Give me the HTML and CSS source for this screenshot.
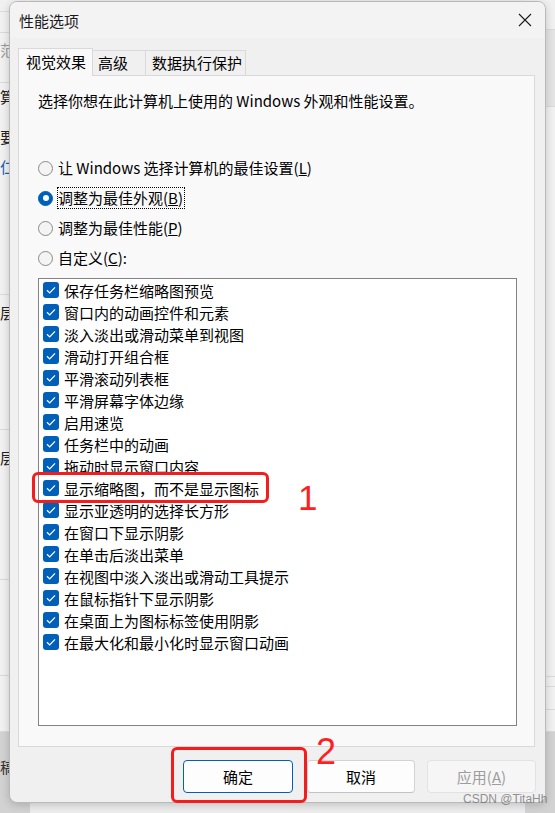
FILE: index.html
```html
<!DOCTYPE html>
<html lang="zh-CN">
<head>
    <meta charset="UTF-8">
    <meta name="viewport" content="width=device-width, initial-scale=1.0">
    <title>性能选项</title>
    <link rel="stylesheet" href="styles.css">
</head>
<body>
    <!-- window behind the dialog, only its edges show -->
    <div class="desk">
        <div class="back back-left">
            <div class="brow row-12"></div>
            <div class="brow row-21"></div>
            <div class="brow row-50"><span class="peek peek-gray">范</span></div>
            <div class="brow row-212">
                <span class="peek peek-a">算</span>
                <span class="peek peek-b">要</span>
                <span class="peek peek-blue">仁</span>
            </div>
            <div class="brow row-135"><span class="peek peek-c">层</span></div>
            <div class="brow row-150"><span class="peek peek-d">层</span></div>
            <div class="brow row-96"></div>
            <div class="brow row-56"></div>
            <div class="brow row-dark"><span class="peek peek-e">稿</span></div>
        </div>
        <div class="back back-right">
            <div class="brow row-30"></div>
            <div class="brow row-77 band"><span class="chev">&gt;</span></div>
            <div class="brow row-570"></div>
            <div class="brow row-10"></div>
            <div class="brow row-23"></div>
            <div class="brow row-22"></div>
            <div class="brow row-dark"></div>
        </div>
    </div>

    <div class="dialog">
        <div class="titlebar">
            <span class="title">性能选项</span>
            <span class="close">
                <svg width="14" height="14" viewBox="0 0 14 14"><path d="M1 1L13 13M13 1L1 13" stroke="#1b1b1b" stroke-width="1.1" fill="none"/></svg>
            </span>
        </div>

        <div class="tabs">
            <div class="tab tab-active">视觉效果</div>
            <div class="tab tab-adv">高级</div>
            <div class="tab tab-dep">数据执行保护</div>
        </div>

        <div class="panel">
            <p class="intro">选择你想在此计算机上使用的 Windows 外观和性能设置。</p>

            <div class="radios">
                <div class="radio"><span class="dot"></span><span class="rtext">让 Windows 选择计算机的最佳设置(<u>L</u>)</span></div>
                <div class="radio"><span class="dot dot-on"></span><span class="rtext focused">调整为最佳外观(<u>B</u>)</span></div>
                <div class="radio"><span class="dot"></span><span class="rtext">调整为最佳性能(<u>P</u>)</span></div>
                <div class="radio"><span class="dot"></span><span class="rtext">自定义(<u>C</u>):</span></div>
            </div>

            <div class="listbox">
                <div class="item"><span class="check"><svg width="16" height="16" viewBox="0 0 16 16"><path d="M4 8.3L6.7 10.9L12 5.4" stroke="#fff" stroke-width="1.3" fill="none"/></svg></span>保存任务栏缩略图预览</div>
                <div class="item"><span class="check"><svg width="16" height="16" viewBox="0 0 16 16"><path d="M4 8.3L6.7 10.9L12 5.4" stroke="#fff" stroke-width="1.3" fill="none"/></svg></span>窗口内的动画控件和元素</div>
                <div class="item"><span class="check"><svg width="16" height="16" viewBox="0 0 16 16"><path d="M4 8.3L6.7 10.9L12 5.4" stroke="#fff" stroke-width="1.3" fill="none"/></svg></span>淡入淡出或滑动菜单到视图</div>
                <div class="item"><span class="check"><svg width="16" height="16" viewBox="0 0 16 16"><path d="M4 8.3L6.7 10.9L12 5.4" stroke="#fff" stroke-width="1.3" fill="none"/></svg></span>滑动打开组合框</div>
                <div class="item"><span class="check"><svg width="16" height="16" viewBox="0 0 16 16"><path d="M4 8.3L6.7 10.9L12 5.4" stroke="#fff" stroke-width="1.3" fill="none"/></svg></span>平滑滚动列表框</div>
                <div class="item"><span class="check"><svg width="16" height="16" viewBox="0 0 16 16"><path d="M4 8.3L6.7 10.9L12 5.4" stroke="#fff" stroke-width="1.3" fill="none"/></svg></span>平滑屏幕字体边缘</div>
                <div class="item"><span class="check"><svg width="16" height="16" viewBox="0 0 16 16"><path d="M4 8.3L6.7 10.9L12 5.4" stroke="#fff" stroke-width="1.3" fill="none"/></svg></span>启用速览</div>
                <div class="item"><span class="check"><svg width="16" height="16" viewBox="0 0 16 16"><path d="M4 8.3L6.7 10.9L12 5.4" stroke="#fff" stroke-width="1.3" fill="none"/></svg></span>任务栏中的动画</div>
                <div class="item"><span class="check"><svg width="16" height="16" viewBox="0 0 16 16"><path d="M4 8.3L6.7 10.9L12 5.4" stroke="#fff" stroke-width="1.3" fill="none"/></svg></span>拖动时显示窗口内容</div>
                <div class="item"><span class="check"><svg width="16" height="16" viewBox="0 0 16 16"><path d="M4 8.3L6.7 10.9L12 5.4" stroke="#fff" stroke-width="1.3" fill="none"/></svg></span>显示缩略图，而不是显示图标</div>
                <div class="item"><span class="check"><svg width="16" height="16" viewBox="0 0 16 16"><path d="M4 8.3L6.7 10.9L12 5.4" stroke="#fff" stroke-width="1.3" fill="none"/></svg></span>显示亚透明的选择长方形</div>
                <div class="item"><span class="check"><svg width="16" height="16" viewBox="0 0 16 16"><path d="M4 8.3L6.7 10.9L12 5.4" stroke="#fff" stroke-width="1.3" fill="none"/></svg></span>在窗口下显示阴影</div>
                <div class="item"><span class="check"><svg width="16" height="16" viewBox="0 0 16 16"><path d="M4 8.3L6.7 10.9L12 5.4" stroke="#fff" stroke-width="1.3" fill="none"/></svg></span>在单击后淡出菜单</div>
                <div class="item"><span class="check"><svg width="16" height="16" viewBox="0 0 16 16"><path d="M4 8.3L6.7 10.9L12 5.4" stroke="#fff" stroke-width="1.3" fill="none"/></svg></span>在视图中淡入淡出或滑动工具提示</div>
                <div class="item"><span class="check"><svg width="16" height="16" viewBox="0 0 16 16"><path d="M4 8.3L6.7 10.9L12 5.4" stroke="#fff" stroke-width="1.3" fill="none"/></svg></span>在鼠标指针下显示阴影</div>
                <div class="item"><span class="check"><svg width="16" height="16" viewBox="0 0 16 16"><path d="M4 8.3L6.7 10.9L12 5.4" stroke="#fff" stroke-width="1.3" fill="none"/></svg></span>在桌面上为图标标签使用阴影</div>
                <div class="item"><span class="check"><svg width="16" height="16" viewBox="0 0 16 16"><path d="M4 8.3L6.7 10.9L12 5.4" stroke="#fff" stroke-width="1.3" fill="none"/></svg></span>在最大化和最小化时显示窗口动画</div>
            </div>
        </div>

        <div class="buttons">
            <button class="btn btn-ok">确定</button>
            <button class="btn btn-cancel">取消</button>
            <button class="btn btn-apply" disabled>应用(<u>A</u>)</button>
        </div>
    </div>

    <!-- red annotations drawn on top of the screenshot -->
    <div class="mark-box mark-box-1"></div>
    <div class="mark-num mark-num-1">1</div>
    <div class="mark-box mark-box-2"></div>
    <div class="mark-num mark-num-2">2</div>
    <div class="watermark">CSDN @TitaHh</div>
</body>
</html>
```

FILE: styles.css
```css
* {
    margin: 0;
    padding: 0;
    box-sizing: border-box;
}

body {
    width: 555px;
    height: 813px;
    overflow: hidden;
    position: relative;
    background-color: #ececec;
    font-family: "Noto Sans CJK SC", "Noto Sans", sans-serif;
    font-size: 15px;
    color: #000;
}

/* background window */
.desk {
    display: flex;
    justify-content: space-between;
    height: 813px;
}

.back {
    width: 30px;
    display: flex;
    flex-direction: column;
    background-color: #f1f1f1;
}

.brow {
    border-bottom: 1px solid #dadada;
    overflow: hidden;
    position: relative;
}

.row-10 { height: 10px; }
.row-12 { height: 12px; }
.row-21 { height: 21px; }
.row-22 { height: 22px; }
.row-23 { height: 23px; }
.row-30 { height: 30px; }
.row-50 { height: 50px; }
.row-56 { height: 56px; }
.row-77 { height: 77px; }
.row-96 { height: 96px; }
.row-135 { height: 135px; }
.row-150 { height: 150px; }
.row-212 { height: 212px; }
.row-570 { height: 570px; }

.row-dark {
    flex: 1;
    background-color: #d2d2d2;
    border-bottom: none;
}

.band {
    background-color: #e4e4e4;
}

.peek {
    display: block;
    font-size: 15px;
    line-height: 20px;
    color: #222;
}

.peek-gray { color: #9a9a9a; margin-top: 7px; }
.peek-a { margin-top: 4px; }
.peek-b { margin-top: 20px; }
.peek-blue { color: #1a5fb4; margin-top: 10px; }
.peek-c { margin-top: 8px; }
.peek-d { margin-top: 18px; }
.peek-e { margin-top: 25px; color: #333; }

.chev {
    display: block;
    margin: 10px 0 0 5px;
    color: #9a9a9a;
    font-size: 14px;
    font-family: "Liberation Sans", sans-serif;
}

/* dialog */
.dialog {
    position: absolute;
    left: 9px;
    top: 1px;
    width: 537px;
    height: 802px;
    background-color: #f0f0f0;
    border: 1px solid #b9b9b9;
    border-radius: 8px;
    box-shadow: 0 2px 8px rgba(0, 0, 0, 0.18);
    display: flex;
    flex-direction: column;
    overflow: hidden;
}

.titlebar {
    height: 36px;
    background-color: #f3f3f3;
    display: flex;
    align-items: center;
    justify-content: space-between;
    padding: 0 13px 0 9px;
}

.title {
    font-size: 15px;
    color: #1a1a1a;
}

.close {
    display: flex;
    width: 14px;
    height: 14px;
}

.tabs {
    display: flex;
    align-items: flex-end;
    margin: 10px 0 0 8px;
    height: 27px;
    position: relative;
    z-index: 1;
}

.tab {
    height: 25px;
    line-height: 23px;
    background-color: #f0f0f0;
    border: 1px solid #d9d9d9;
    border-bottom: none;
    padding-left: 6px;
    white-space: nowrap;
}

.tab-active {
    height: 28px;
    margin-bottom: -1px;
    width: 75px;
    padding-left: 7px;
    line-height: 26px;
    background-color: #f9f9f9;
}

.tab-adv {
    width: 53px;
    border-left: none;
    padding-left: 5px;
}

.tab-dep {
    width: 100px;
    border-left: none;
}

.panel {
    margin: 0 10px 0 8px;
    height: 672px;
    background-color: #f9f9f9;
    border: 1px solid #d9d9d9;
    display: flex;
    flex-direction: column;
}

.intro {
    margin: 15px 0 0 19px;
    line-height: 20px;
}

.radios {
    margin: 42px 0 0 19px;
}

.radio {
    height: 30px;
    display: flex;
    align-items: center;
    gap: 4px;
}

.dot {
    width: 15px;
    height: 15px;
    border-radius: 50%;
    border: 1px solid #8a8a8a;
    background-color: #f4f4f4;
    position: relative;
}

.dot-on {
    background-color: #005fb8;
    border-color: #005fb8;
}

.dot-on::after {
    content: "";
    position: absolute;
    left: 3.5px;
    top: 3.5px;
    width: 6px;
    height: 6px;
    border-radius: 50%;
    background-color: #fff;
}

.rtext {
    line-height: 20px;
    border: 1px solid transparent;
    padding-right: 1px;
}

.rtext.focused {
    border: 1px dotted #000;
}

.listbox {
    margin: 5px 17px 20px 19px;
    height: 448px;
    background-color: #fff;
    border: 1px solid #838383;
}

.item {
    height: 22px;
    display: flex;
    align-items: center;
    gap: 5px;
    padding-left: 4px;
    white-space: nowrap;
}

.check {
    width: 16px;
    height: 16px;
    border-radius: 3px;
    background-color: #005fb8;
    display: flex;
}

.buttons {
    display: flex;
    justify-content: flex-end;
    margin-top: 13px;
    padding-right: 9px;
}

.btn {
    height: 33px;
    font-family: inherit;
    font-size: 15px;
    color: #000;
    background-color: #fdfdfd;
    border: 1px solid #d3d3d3;
    border-bottom-color: #c2c2c2;
    border-radius: 4px;
}

.btn-ok {
    width: 110px;
    border: 1px solid #005fb8;
}

.btn-cancel {
    width: 108px;
    margin-left: 14px;
}

.btn-apply {
    width: 109px;
    margin-left: 12px;
    color: #9d9d9d;
    background-color: #f6f6f6;
    border-color: #e2e2e2;
}

/* annotations */
.mark-box {
    position: absolute;
    border: 3px solid #f41c1c;
    border-radius: 6px;
}

.mark-box-1 {
    left: 32px;
    top: 472px;
    width: 237px;
    height: 31px;
}

.mark-box-2 {
    left: 171px;
    top: 747px;
    width: 136px;
    height: 56px;
}

.mark-num {
    position: absolute;
    font-family: "Liberation Sans", sans-serif;
    line-height: 35px;
    color: #ff1f1f;
}

.mark-num-1 {
    left: 298px;
    top: 480px;
    font-size: 35px;
}

.mark-num-2 {
    left: 316px;
    top: 734px;
    font-size: 36px;
}

.watermark {
    position: absolute;
    left: 463px;
    top: 791px;
    font-family: "Liberation Sans", sans-serif;
    font-size: 12px;
    line-height: 16px;
    color: rgba(110, 110, 110, 0.75);
}
```
